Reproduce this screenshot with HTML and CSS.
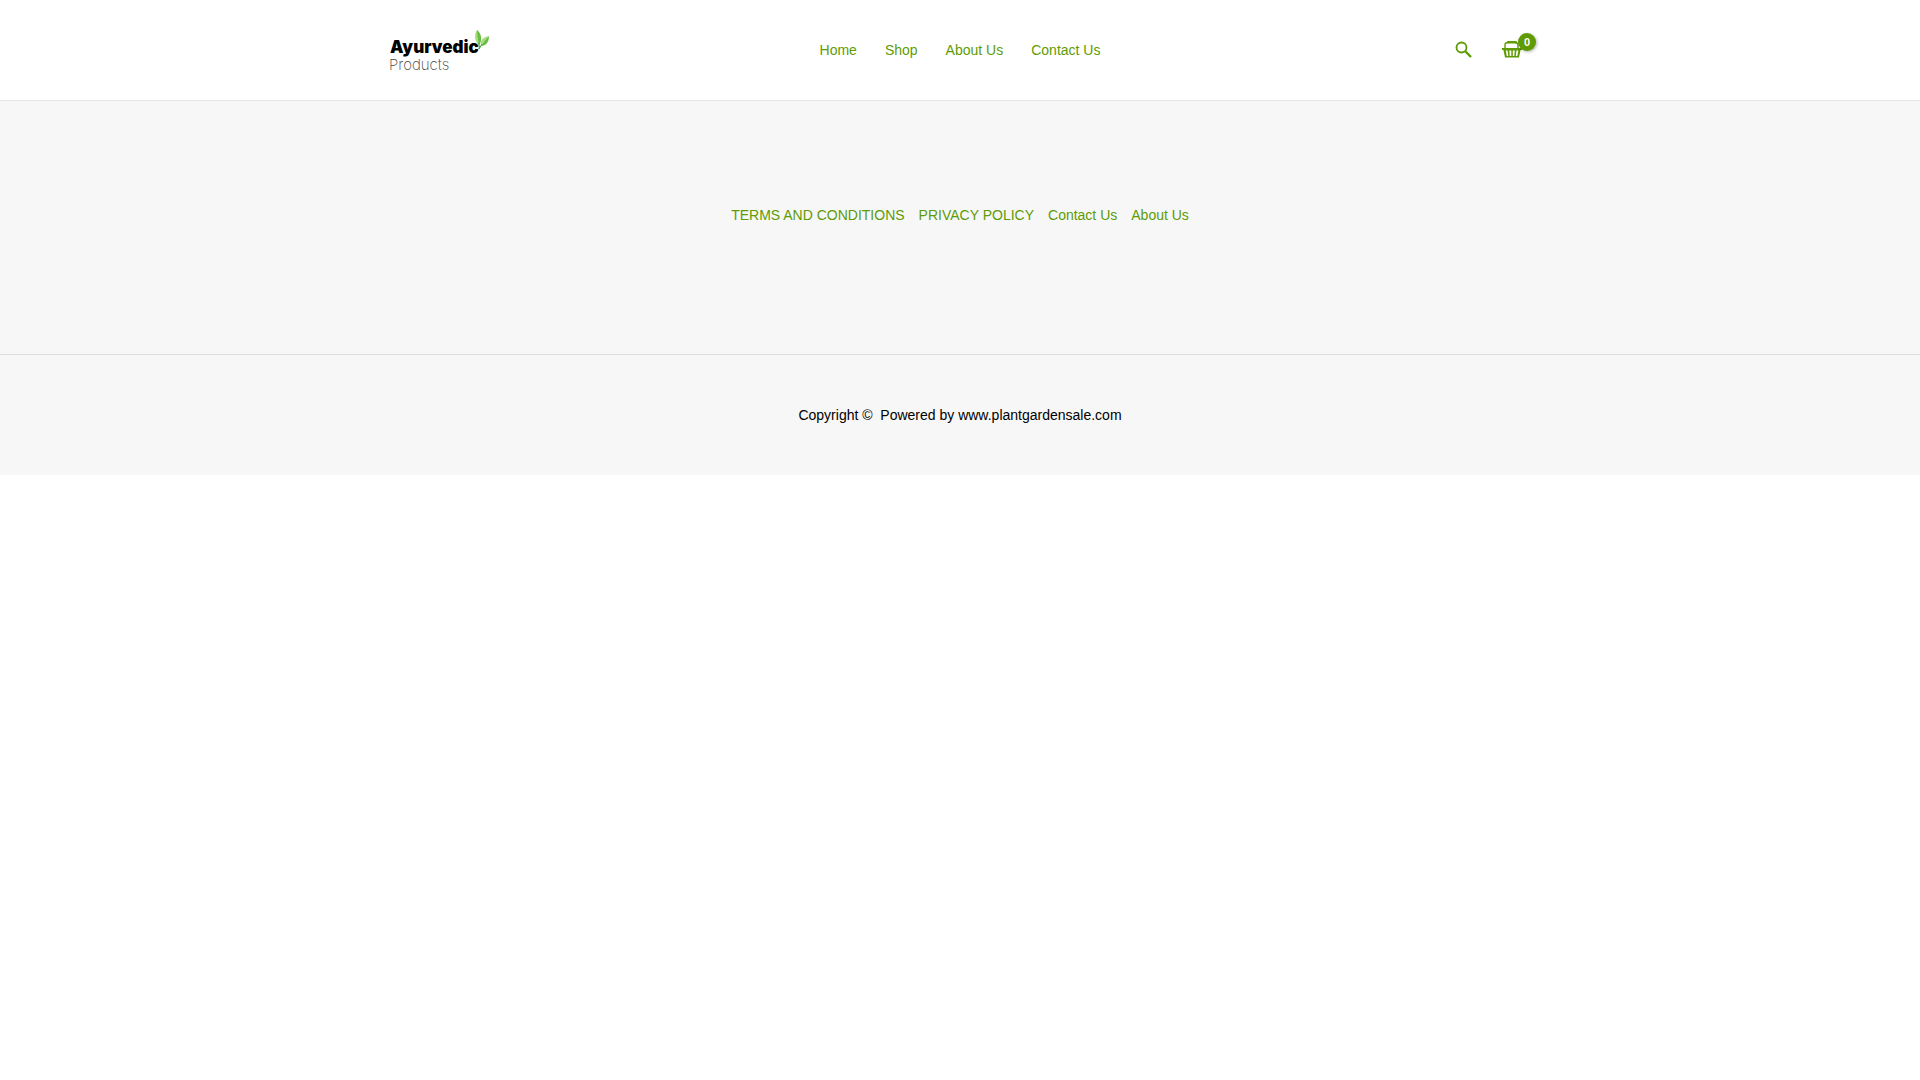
FILE: index.html
```html
<!DOCTYPE html>
<html lang="en">

<head>
  <meta charset="UTF-8">
  <meta name="viewport" content="width=device-width, initial-scale=1.0">
  <title>Ayurvedic Products</title>
  <link rel="stylesheet" href="styles.css">
</head>

<body>
  <header class="site-header">
    <div class="container header-row">
      <a class="logo" href="#" aria-label="Ayurvedic Products">
        <svg width="120" height="60" viewBox="0 0 120 60">
          <text class="logo-name" x="10" y="33">Ayurvedic</text>
          <text class="logo-sub" x="9" y="50">Products</text>
          <path fill="#a5dc7c" d="M97 10C93.500 15 95 22 99 25C102 21 102 14 97 10Z" />
          <path fill="#68bd45" d="M97 10C97.500 16 98 20 99 25C102 21 102 14 97 10Z" />
          <path fill="#a5dc7c" d="M109 16C103 17 100 20 101 26C103 23 105 20 109 16Z" />
          <path fill="#68bd45" d="M109 16C105 20 103 23 101 26C106 26 109 22 109 16Z" />
          <path fill="none" stroke="#4c9a2f" d="M98.500 23Q100 26 99 29L102 24" />
        </svg>
      </a>
      <nav class="main-nav">
        <a href="#">Home</a>
        <a href="#">Shop</a>
        <a href="#">About Us</a>
        <a href="#">Contact Us</a>
      </nav>
      <div class="header-tools">
        <button class="search" type="button" aria-label="Search">
          <svg width="18" height="18" viewBox="0 0 18 18">
            <circle cx="6.500" cy="6.500" r="5" fill="none" stroke="currentColor" stroke-width="1.800" />
            <path d="M10.500 10.500L16 16" stroke="currentColor" stroke-width="2.400" />
          </svg>
        </button>
        <a class="cart" href="#" aria-label="Shopping cart">
          <svg width="20" height="20" viewBox="0 0 20 20">
            <path fill="none" stroke="currentColor" stroke-width="1.400" d="M3 8V5Q3 2.500 6 2.500M13 2.500Q16 2.500 16 5V8" />
            <rect x="5" y="1" width="10" height="2.600" rx="1" fill="currentColor" />
            <path fill="currentColor" fill-rule="evenodd" d="M0 8H20V10H18.600L17 17.500H3L1.400 10H0ZM3.800 10.500L4.800 16H6.300L5.500 10.500ZM7.300 10.500L7.800 16H9.300V10.500ZM10.800 10.500V16H12.300L12.800 10.500ZM14.500 10.500L13.800 16H15.300L16.300 10.500Z" />
          </svg>
          <span class="cart-count">0</span>
        </a>
      </div>
    </div>
  </header>

  <footer class="site-footer">
    <nav class="footer-nav">
      <a href="#">TERMS AND CONDITIONS</a>
      <a href="#">PRIVACY POLICY</a>
      <a href="#">Contact Us</a>
      <a href="#">About Us</a>
    </nav>
    <div class="copyright">Copyright © &nbsp;Powered by www.plantgardensale.com</div>
  </footer>
</body>

</html>
```
FILE: styles.css
```css
* {
  box-sizing: border-box;
}

body {
  margin: 0;
  background-color: #fff;
  color: #000;
  font-family: "Liberation Sans", Arial, sans-serif;
  font-size: 14px;
  line-height: 24px;
}

a {
  color: #5e9b05;
  text-decoration: none;
}

.container {
  max-width: 1200px;
  margin: 0 auto;
  padding: 0 20px;
}

.site-header {
  border-bottom: 1px solid #e6e6e6;
}

.header-row {
  display: grid;
  grid-template-columns: 1fr auto 1fr;
  align-items: center;
  min-height: 100px;
}

.logo svg {
  display: block;
}

.logo-name {
  fill: #000;
  font-family: Inter, sans-serif;
  font-size: 17px;
  font-weight: 900;
}

.logo-sub {
  fill: #444;
  font-family: Inter, sans-serif;
  font-size: 15px;
  font-weight: 200;
}

.main-nav {
  display: flex;
  gap: 28px;
}

.header-tools {
  display: flex;
  justify-content: flex-end;
  align-items: center;
  gap: 29px;
  padding-right: 18px;
}

.search {
  display: flex;
  padding: 0;
  border: none;
  background: none;
  color: #5e9b05;
  cursor: pointer;
}

.cart {
  display: flex;
  position: relative;
}

.cart-count {
  position: absolute;
  top: -7px;
  right: -14px;
  width: 18px;
  height: 18px;
  border-radius: 50%;
  background-color: #5e9b05;
  box-shadow: 1px 1px 3px rgba(0, 0, 0, 0.3);
  color: #fff;
  font-size: 11px;
  font-weight: bold;
  line-height: 18px;
  text-align: center;
}

.site-footer {
  background-color: #f7f7f7;
}

.footer-nav {
  display: flex;
  justify-content: center;
  gap: 14px;
  padding: 102px 20px 127px;
  border-bottom: 1px solid #ddd;
}

.copyright {
  padding: 48px 20px;
  text-align: center;
}
```
